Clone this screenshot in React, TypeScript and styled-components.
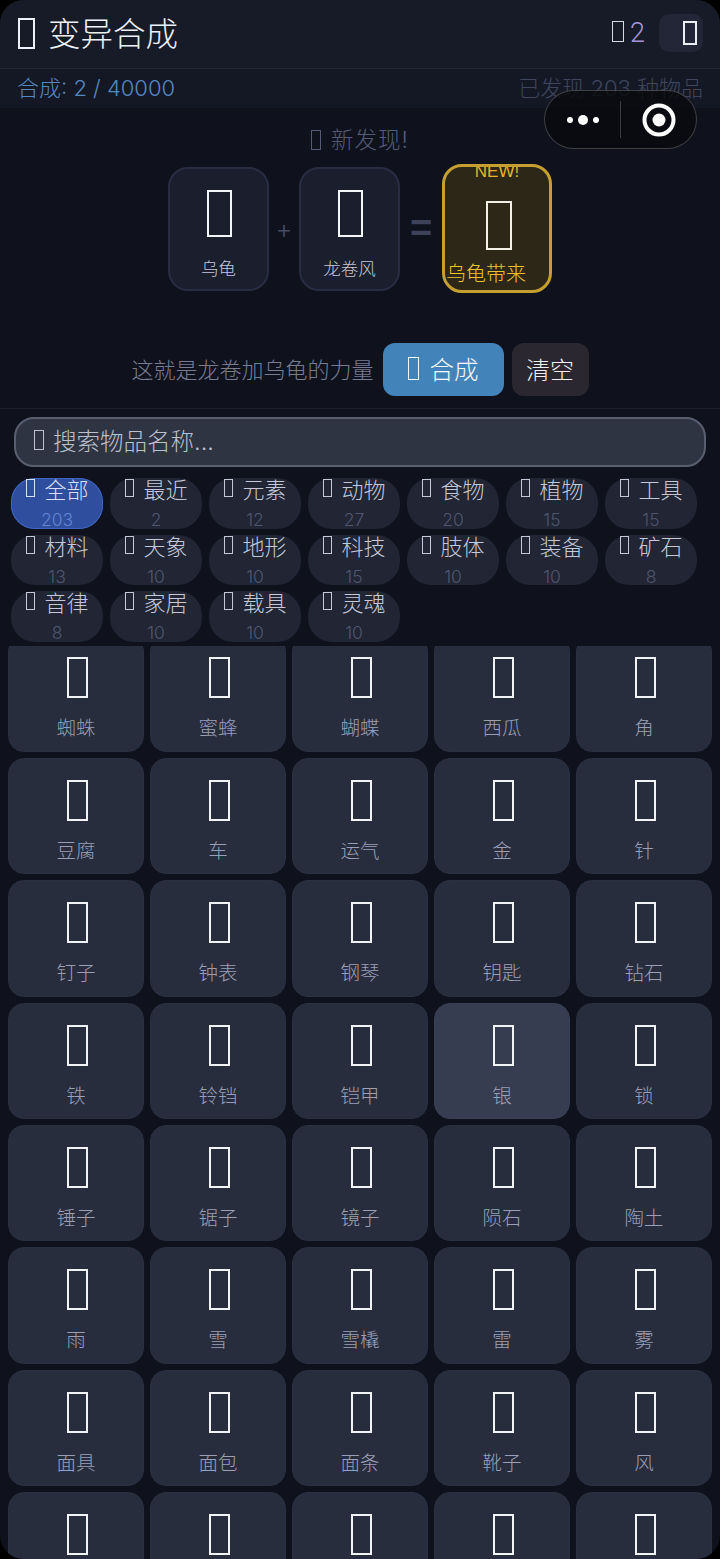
import styled, {createGlobalStyle} from "styled-components";

const GlobalStyle = createGlobalStyle`
  html, body {
    margin: 0;
    padding: 0;
    background: #000;
  }
  * {
    box-sizing: border-box;
  }
`;

const CATEGORIES = [
    {name: "全部", count: 203},
    {name: "最近", count: 2},
    {name: "元素", count: 12},
    {name: "动物", count: 27},
    {name: "食物", count: 20},
    {name: "植物", count: 15},
    {name: "工具", count: 15},
    {name: "材料", count: 13},
    {name: "天象", count: 10},
    {name: "地形", count: 10},
    {name: "科技", count: 15},
    {name: "肢体", count: 10},
    {name: "装备", count: 10},
    {name: "矿石", count: 8},
    {name: "音律", count: 8},
    {name: "家居", count: 10},
    {name: "载具", count: 10},
    {name: "灵魂", count: 10},
];

const ITEMS = [
    "蜘蛛", "蜜蜂", "蝴蝶", "西瓜", "角",
    "豆腐", "车", "运气", "金", "针",
    "钉子", "钟表", "钢琴", "钥匙", "钻石",
    "铁", "铃铛", "铠甲", "银", "锁",
    "锤子", "锯子", "镜子", "陨石", "陶土",
    "雨", "雪", "雪橇", "雷", "雾",
    "面具", "面包", "面条", "靴子", "风",
    "飞机", "食物", "香蕉", "马", "骨头",
];

const Page = styled.div`
  width: 720px;
  height: 1559px;
  overflow: hidden;
  position: relative;
  display: flex;
  flex-direction: column;
  background: #0f121d;
  border-radius: 24px;
  font-family: "Inter", "Noto Sans CJK SC", "Noto Sans", sans-serif;
  font-weight: 300;
`;

// missing-glyph box: the emoji in the reference rendered as empty rectangles
const Tofu = styled.span<{$w: number; $h: number; $line?: number}>`
  display: inline-block;
  flex: none;
  width: ${p => p.$w}px;
  height: ${p => p.$h}px;
  border: ${p => p.$line ?? 2}px solid currentColor;
`;

const SlotGlyph = styled(Tofu)`
  margin-left: 2px;
`;

const ResultGlyph = styled(Tofu)`
  margin-top: 25px;
  margin-left: 4px;
`;

const ItemGlyph = styled(Tofu)`
  margin-left: 2px;
`;

const Header = styled.header`
  height: 69px;
  flex: none;
  display: flex;
  align-items: center;
  justify-content: space-between;
  padding: 0 17px 2px 18px;
  background: #171b28;
  border-bottom: 1px solid #222738;
`;

const Title = styled.h1`
  margin: 0;
  display: flex;
  align-items: center;
  gap: 13px;
  font-size: 32.5px;
  font-weight: 300;
  line-height: 36px;
  color: #eef0fa;
`;

const TitleText = styled.span`
  padding-top: 3px;
`;

const HeaderRight = styled.div`
  display: flex;
  align-items: center;
  gap: 14px;
`;

const Badge = styled.div`
  display: flex;
  align-items: center;
  gap: 6px;
  font-family: "Roboto", sans-serif;
  font-size: 27px;
  font-weight: 300;
  color: #a596dc;

  span {
    color: #d5d8e6;
  }
`;

const IconButton = styled.div`
  width: 44px;
  height: 38px;
  display: flex;
  align-items: center;
  justify-content: flex-end;
  padding-right: 6px;
  border-radius: 10px;
  background: #222636;
  color: #eceef6;
`;

const StatsBar = styled.div`
  height: 39px;
  flex: none;
  display: flex;
  align-items: center;
  justify-content: space-between;
  padding: 0 17px 1px;
  background: #141825;
  font-size: 22px;
  line-height: 28px;
`;

const StatsLeft = styled.span`
  color: #5588c0;
`;

const StatsRight = styled.span`
  color: #3f455c;
`;

const Capsule = styled.div`
  position: absolute;
  left: 544px;
  top: 90px;
  width: 153px;
  height: 59px;
  display: flex;
  align-items: center;
  border-radius: 30px;
  background: rgba(10, 10, 14, 0.82);
  border: 1px solid rgba(255, 255, 255, 0.22);
`;

const CapsuleHalf = styled.div`
  flex: 1;
  display: flex;
  align-items: center;
  justify-content: center;
`;

const CapsuleDivider = styled.div`
  width: 1px;
  height: 37px;
  background: rgba(255, 255, 255, 0.2);
`;

const Workbench = styled.section`
  height: 301px;
  flex: none;
  display: flex;
  flex-direction: column;
  align-items: center;
  padding-top: 17px;
  border-bottom: 1px solid #1b1f2e;
`;

const Discovery = styled.div`
  height: 30px;
  display: flex;
  align-items: center;
  gap: 10px;
  font-size: 22.5px;
  line-height: 28px;
  letter-spacing: 1px;
  color: #555b75;
`;

const Equation = styled.div`
  height: 129px;
  margin-top: 9px;
  display: flex;
  align-items: center;
`;

const Slot = styled.div`
  width: 101px;
  height: 124px;
  display: flex;
  flex-direction: column;
  align-items: center;
  padding-top: 21px;
  border-radius: 20px;
  border: 2px solid #292d41;
  background: #1b1e2d;
  color: #f4f5f8;
`;

const SlotName = styled.div`
  margin-top: 20px;
  font-size: 17.5px;
  line-height: 24px;
  color: #c2c7dc;
`;

const Plus = styled.div`
  width: 30px;
  text-align: center;
  font-size: 26px;
  color: #454a62;
`;

const EqualSign = styled.div`
  width: 42px;
  text-align: center;
  font-family: "Liberation Sans", sans-serif;
  font-size: 38px;
  font-weight: 700;
  color: #3d4259;
`;

const ResultSlot = styled.div`
  width: 110px;
  height: 129px;
  overflow: hidden;
  display: flex;
  flex-direction: column;
  align-items: center;
  border-radius: 20px;
  border: 3px solid #c59f2f;
  background: #2d2718;
  color: #f1efe6;
`;

const NewTag = styled.div`
  height: 13px;
  font-family: "Liberation Sans", sans-serif;
  font-size: 17px;
  font-weight: 400;
  line-height: 9px;
  color: #e3b52b;
`;

const ResultNames = styled.div`
  width: 100%;
  margin-top: 10px;
  padding-left: 1px;
  font-size: 20px;
  line-height: 28px;
  color: #f0c232;
`;

const ResultLine = styled.div<{$align: string}>`
  text-align: ${p => p.$align};
`;

const ActionRow = styled.div`
  margin-top: 50px;
  display: flex;
  align-items: center;
`;

const Hint = styled.span`
  margin-right: 9px;
  font-size: 22px;
  line-height: 26px;
  color: #777c92;
`;

const MergeButton = styled.div`
  width: 121px;
  height: 53px;
  display: flex;
  align-items: center;
  justify-content: center;
  gap: 11px;
  padding-bottom: 3px;
  border-radius: 12px;
  background: #4284ba;
  color: #f3f8fc;
  font-size: 24.5px;
`;

const ClearButton = styled.div`
  width: 77px;
  height: 53px;
  margin-left: 8px;
  display: flex;
  align-items: center;
  justify-content: center;
  padding-bottom: 3px;
  border-radius: 12px;
  background: #2a2730;
  color: #f2f0f4;
  font-size: 24px;
`;

const SearchBox = styled.div`
  height: 50px;
  flex: none;
  margin: 8px 14px 0;
  display: flex;
  align-items: center;
  gap: 9px;
  padding: 0 0 4px 18px;
  border-radius: 20px;
  border: 2px solid #5a5f70;
  background: #2f3443;
  font-size: 23.5px;
  color: #bcc0cd;
`;

const CategoryGrid = styled.div`
  flex: none;
  display: grid;
  grid-template-columns: repeat(7, 92px);
  grid-auto-rows: 50.6px;
  column-gap: 7px;
  row-gap: 6px;
  margin-top: 11px;
  padding: 0 11px;
`;

const Chip = styled.div<{$active?: boolean}>`
  display: flex;
  flex-direction: column;
  align-items: center;
  border-radius: 24px;
  background: ${p => (p.$active ? "#2f4e9e" : "#212534")};
  box-shadow: ${p => (p.$active ? "inset 0 0 0 1px #3f66c0" : "none")};
`;

const ChipLabel = styled.div<{$active?: boolean}>`
  height: 20px;
  padding-left: 1px;
  display: flex;
  align-items: center;
  gap: 9px;
  font-size: 22px;
  color: ${p => (p.$active ? "#d6dff9" : "#c4c8d8")};
`;

const ChipCount = styled.div<{$active?: boolean}>`
  margin-top: 12px;
  font-size: 17.5px;
  line-height: 20px;
  color: ${p => (p.$active ? "#6683cf" : "#50566e")};
`;

const ScrollArea = styled.div`
  flex: 1;
  min-height: 0;
  overflow: hidden;
  margin-top: 4px;
  padding: 0 8px;
`;

const ItemGrid = styled.div`
  margin-top: -10.4px;
  display: grid;
  grid-template-columns: repeat(5, 136px);
  grid-auto-rows: 116.4px;
  gap: 6px;
`;

const ItemCard = styled.div<{$selected?: boolean}>`
  display: flex;
  flex-direction: column;
  align-items: center;
  padding-top: 21px;
  border-radius: 16px;
  border: 1px solid ${p => (p.$selected ? "#3a4053" : "#2b3041")};
  background: ${p => (p.$selected ? "#373d50" : "#282d3d")};
  color: #f2f3f7;
`;

const ItemName = styled.div`
  margin-top: 16px;
  font-size: 19.5px;
  line-height: 28px;
  color: #9a9fb6;
`;

export default function App() {
    return (
        <>
            <GlobalStyle/>
            <Page>
                <Header>
                    <Title><Tofu $w={17} $h={31}/><TitleText>变异合成</TitleText></Title>
                    <HeaderRight>
                        <Badge><span><Tofu $w={12} $h={21} $line={1}/></span>2</Badge>
                        <IconButton><Tofu $w={14} $h={24}/></IconButton>
                    </HeaderRight>
                </Header>
                <StatsBar>
                    <StatsLeft>合成: 2 / 40000</StatsLeft>
                    <StatsRight>已发现 203 种物品</StatsRight>
                </StatsBar>
                <Capsule>
                    <CapsuleHalf>
                        <svg width="34" height="12" viewBox="0 0 34 12">
                            <circle cx="4" cy="6" r="3" fill="#fff"/>
                            <circle cx="17" cy="6" r="5" fill="#fff"/>
                            <circle cx="30" cy="6" r="3" fill="#fff"/>
                        </svg>
                    </CapsuleHalf>
                    <CapsuleDivider/>
                    <CapsuleHalf>
                        <svg width="34" height="34" viewBox="0 0 34 34">
                            <circle cx="17" cy="17" r="14.5" fill="none" stroke="#fff" strokeWidth="4"/>
                            <circle cx="17" cy="17" r="6.5" fill="#fff"/>
                        </svg>
                    </CapsuleHalf>
                </Capsule>
                <Workbench>
                    <Discovery><Tofu $w={10} $h={20} $line={1}/>新发现!</Discovery>
                    <Equation>
                        <Slot><SlotGlyph $w={25} $h={47}/><SlotName>乌龟</SlotName></Slot>
                        <Plus>+</Plus>
                        <Slot><SlotGlyph $w={25} $h={47}/><SlotName>龙卷风</SlotName></Slot>
                        <EqualSign>=</EqualSign>
                        <ResultSlot>
                            <NewTag>NEW!</NewTag>
                            <ResultGlyph $w={26} $h={49}/>
                            <ResultNames>
                                <ResultLine $align="left">乌龟带来</ResultLine>
                                <ResultLine $align="center">龙卷</ResultLine>
                            </ResultNames>
                        </ResultSlot>
                    </Equation>
                    <ActionRow>
                        <Hint>这就是龙卷加乌龟的力量</Hint>
                        <MergeButton><Tofu $w={11} $h={23} $line={1}/>合成</MergeButton>
                        <ClearButton>清空</ClearButton>
                    </ActionRow>
                </Workbench>
                <SearchBox><Tofu $w={10} $h={20} $line={1}/>搜索物品名称...</SearchBox>
                <CategoryGrid>
                    {CATEGORIES.map((c, i) => (
                        <Chip key={c.name} $active={i === 0}>
                            <ChipLabel $active={i === 0}><Tofu $w={9} $h={18} $line={1}/>{c.name}</ChipLabel>
                            <ChipCount $active={i === 0}>{c.count}</ChipCount>
                        </Chip>
                    ))}
                </CategoryGrid>
                <ScrollArea>
                    <ItemGrid>
                        {ITEMS.map(name => (
                            <ItemCard key={name} $selected={name === "银"}>
                                <ItemGlyph $w={21} $h={41}/>
                                <ItemName>{name}</ItemName>
                            </ItemCard>
                        ))}
                    </ItemGrid>
                </ScrollArea>
            </Page>
        </>
    );
}
